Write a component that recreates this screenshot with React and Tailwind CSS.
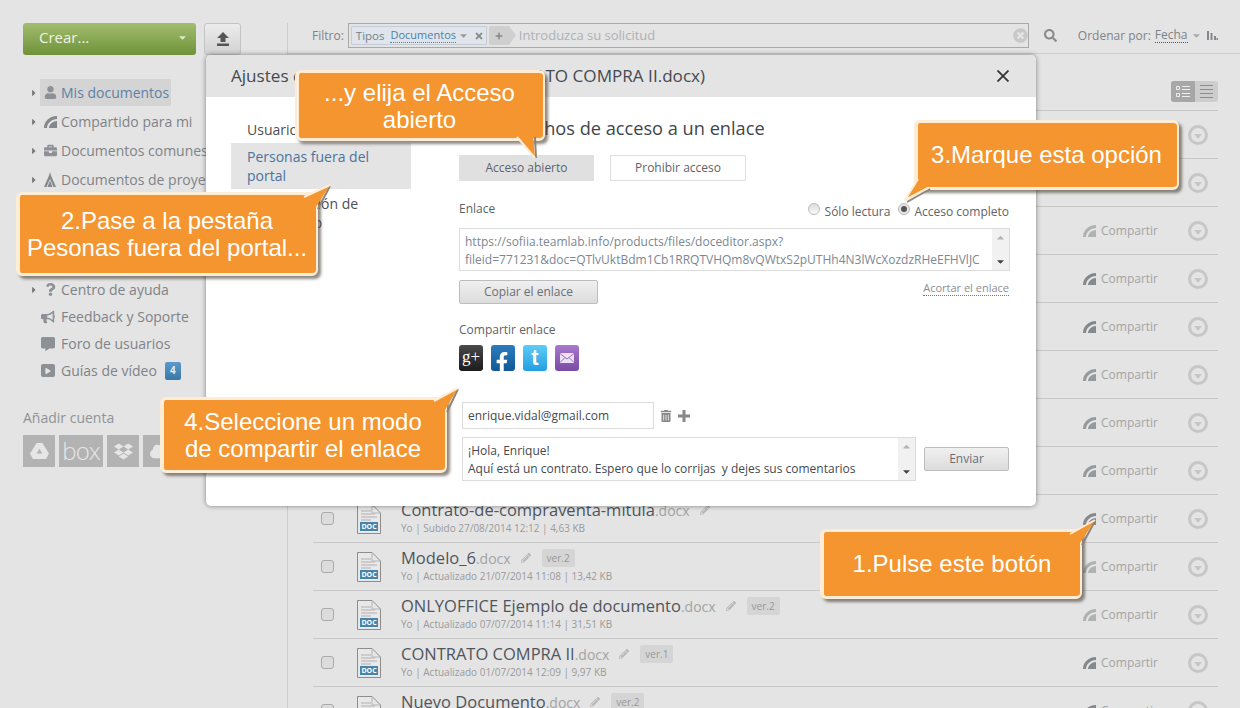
import React from "react";
import {
  FaUser, FaBriefcase, FaQuestion, FaBullhorn, FaCommentAlt, FaTrashAlt, FaSearch,
  FaTimes, FaPencilAlt, FaDropbox, FaCaretDown, FaCaretRight, FaCaretUp, FaPlay,
  FaTimesCircle, FaCloud, FaPlus, FaFacebookF,
} from "react-icons/fa";

const files = [
  { name: "Contrato de servicios", meta: "Yo | Actualizado 12/09/2014 10:20 | 12,10 KB", share: 0.6 },
  { name: "Acuerdo de socios", meta: "Yo | Actualizado 11/09/2014 09:41 | 18,22 KB", share: 0.6 },
  { name: "Oferta comercial", meta: "Yo | Subido 10/09/2014 16:02 | 8,75 KB", share: 0.55 },
  { name: "Plantilla de factura", meta: "Yo | Subido 09/09/2014 13:30 | 6,40 KB", share: 1 },
  { name: "Informe anual", meta: "Yo | Subido 05/09/2014 12:15 | 22,05 KB", share: 1 },
  { name: "Propuesta", meta: "Yo | Subido 03/09/2014 11:48 | 5,32 KB", share: 0.8 },
  { name: "Carta de presentación", meta: "Yo | Subido 02/09/2014 10:05 | 4,90 KB", share: 0.8 },
  { name: "Contrato de alquiler", meta: "Yo | Subido 28/08/2014 18:27 | 7,16 KB", share: 0.8 },
  { name: "Contrato-de-compraventa-mitula", meta: "Yo | Subido 27/08/2014 12:12 | 4,63 KB", share: 1 },
  { name: "Modelo_6", meta: "Yo | Actualizado 21/07/2014 11:08 | 13,42 KB", ver: "ver.2", share: 0.55 },
  { name: "ONLYOFFICE Ejemplo de documento", meta: "Yo | Actualizado 07/07/2014 11:14 | 31,51 KB", ver: "ver.2", share: 0.55 },
  { name: "CONTRATO COMPRA II", meta: "Yo | Actualizado 01/07/2014 12:09 | 9,97 KB", ver: "ver.1", share: 1 },
  { name: "Nuevo Documento", meta: "Yo | Actualizado 30/06/2014 10:33 | 8,02 KB", ver: "ver.2", share: 1 },
];

function ShareIcon({ className = "", style }) {
  return (
    <svg viewBox="0 0 13 12" className={className} style={style} fill="#85888c">
      <path d="M0 12C0 6 5 0 13 0V3C8 3 3 7 3 12Z" />
      <path d="M5 12C5 9 8 5 13 5V12Z" />
    </svg>
  );
}

function ProjectIcon() {
  return (
    <svg viewBox="0 0 12 15" className="h-[15px] w-[12px]" fill="#85888c">
      <path d="M6 0L7 3.5L12 15H9.5L6 7L2.5 15H0L5 3.5Z" />
      <path d="M6 8.5L8.5 15H3.5Z" />
    </svg>
  );
}

function UploadIcon() {
  return (
    <svg viewBox="0 0 14 14" className="h-[14px] w-[14px]" fill="#555">
      <path d="M7 0L13 6H9.5V10H4.5V6H1Z" />
      <path d="M1 11.5H13V14H1Z" />
    </svg>
  );
}

function DocIcon() {
  return (
    <div className="relative h-[30px] w-[24px] shrink-0">
      <svg viewBox="0 0 24 30" className="h-[30px] w-[24px]" fill="none">
        <path d="M.5.5H15L23.5 9V29.5H.5Z" fill="#e8e8e8" stroke="#8d8d8d" />
        <path d="M15 .5V9H23.5" stroke="#b5b5b5" />
        <path d="M4 7H14M4 10H18M4 13H20M4 16H14" stroke="#b0b0b0" />
      </svg>
      <span className="absolute left-[3px] top-[18px] flex h-[9px] w-[18px] items-center justify-center bg-[#4585ad] text-[7px] font-bold leading-none text-white">
        DOC
      </span>
    </div>
  );
}

function NavRow({ icon, label, arrow, active, badge }) {
  return (
    <div className="flex h-[27px] items-center">
      <span className="flex w-[17px] justify-start pl-[6px] text-[10px] text-[#777]">
        {arrow && <FaCaretRight />}
      </span>
      <div className={`flex h-[27px] items-center pl-[3px] pr-[2px] ${active ? "bg-[#d4d4d4]" : ""}`}>
        {/* rows without a caret have a wider icon that starts further left */}
        <span className={arrow
          ? "flex w-[18px] items-center justify-start pl-[1px] text-[13px] text-[#8d9094]"
          : "-ml-[2px] flex w-[20px] items-center justify-start text-[14px] text-[#8d9094]"}
        >
          {icon}
        </span>
        <span className={`whitespace-nowrap text-[14px] ${active ? "text-[#5d80a6]" : "text-[#7f8388]"}`}>{label}</span>
      </div>
      {badge && (
        <span className="ml-[6px] flex h-[18px] w-[16px] items-center justify-center rounded-[2px] bg-gradient-to-b from-[#5c9bc9] to-[#3a77a7] text-[10px] font-bold text-[#dfeaf2]">
          {badge}
        </span>
      )}
    </div>
  );
}

function Sidebar() {
  return (
    <aside className="w-[287px] shrink-0 pl-[23px] pt-[23px]">
      <div className="flex gap-[8px]">
        <div className="flex h-[32px] w-[173px] items-center justify-between rounded-[3px] bg-gradient-to-b from-[#a3bd6e] to-[#6e9238] pb-[3px] pl-[16px] pr-[8px] text-[15px] text-[#eef3e2]">
          <span>Crear...</span>
          <FaCaretDown className="text-[11px] text-[#dfe8cc]" />
        </div>
        <div className="flex h-[32px] w-[37px] items-center justify-center rounded-[3px] border border-[#c4c4c4] bg-gradient-to-b from-[#ececec] to-[#d2d2d2]">
          <UploadIcon />
        </div>
      </div>
      <nav className="mt-[24px] flex flex-col gap-[2px]">
        <NavRow arrow active icon={<FaUser />} label="Mis documentos" />
        <NavRow arrow icon={<ShareIcon className="h-[12px] w-[13px]" />} label="Compartido para mi" />
        <NavRow arrow icon={<FaBriefcase />} label="Documentos comunes" />
        <NavRow arrow icon={<ProjectIcon />} label="Documentos de proyectos" />
      </nav>
      <nav className="mt-[83px]">
        <NavRow arrow icon={<FaQuestion />} label="Centro de ayuda" />
        <NavRow icon={<FaBullhorn />} label="Feedback y Soporte" />
        <NavRow icon={<FaCommentAlt />} label="Foro de usuarios" />
        <NavRow
          icon={
            <span className="flex h-[13px] w-[14px] items-center justify-center rounded-[2px] bg-[#8d9094] text-[6px] text-[#e4e4e4]">
              <FaPlay />
            </span>
          }
          label="Guías de vídeo"
          badge="4"
        />
      </nav>
      <p className="mt-[24px] text-[14px] leading-[19px] text-[#8f9398]">Añadir cuenta</p>
      <div className="mt-[8px] flex gap-[4px] text-[#e6e6e6]">
        <div className="flex h-[32px] w-[32px] items-center justify-center bg-[#b3b3b3]">
          <svg viewBox="0 0 20 18" className="h-[17px] w-[19px]" fill="#e6e6e6">
            <path d="M7 0H13L20 11L17 17H3L0 11ZM10 6L7 11H13Z" />
          </svg>
        </div>
        <div className="flex h-[32px] w-[44px] items-center justify-center bg-[#b3b3b3] text-[24px] font-light leading-none tracking-[-1px]">box</div>
        <div className="flex h-[32px] w-[32px] items-center justify-center bg-[#b3b3b3] text-[19px]"><FaDropbox /></div>
        <div className="flex h-[32px] w-[32px] items-center justify-center bg-[#b3b3b3] text-[19px]"><FaCloud /></div>
      </div>
    </aside>
  );
}

function Toolbar() {
  return (
    <div className="flex h-[31px] items-start border-b border-[#cdcdcd] pl-[24px] text-[12px]">
      <div className="flex h-[25px] items-center text-[#7f8388]">Filtro:</div>
      <div className="ml-[4px] flex h-[25px] w-[681px] items-center border border-[#a9a9a9] pl-[2px] pr-[2px]">
        <div className="flex h-[19px] w-[136px] items-center rounded-[1px] border border-[#c2cdd8] bg-[#dfe5ea] pl-[4px] text-[11.5px] text-[#76808a]">
          <span>Tipos</span>
          <span className="ml-[6px] border-b border-dotted border-[#4a7fb0] text-[11px] leading-[14px] text-[#4f7eab]">Documentos</span>
          <FaCaretDown className="ml-[2px] text-[11px] text-[#999]" />
          <FaTimes className="ml-[5px] text-[10px] text-[#888]" />
        </div>
        <div className="relative ml-[2px] flex h-[19px] w-[20px] items-center justify-center rounded-l-[2px] bg-[#cfcfcf] text-[8px] text-[#888]">
          <FaPlus />
          <svg viewBox="0 0 7 19" className="absolute left-[20px] top-0 h-[19px] w-[7px]" fill="#cfcfcf">
            <path d="M0 0L7 9.5L0 19Z" />
          </svg>
        </div>
        <span className="ml-[10px] text-[13px] text-[#adb1b5]">Introduzca su solicitud</span>
        <FaTimesCircle className="-mr-[2px] ml-auto text-[15px] text-[#c8c8c8]" />
      </div>
      <div className="ml-[15px] flex h-[25px] items-center text-[13px] text-[#8a8a8a]"><FaSearch /></div>
      <div className="ml-[21px] flex h-[25px] items-center text-[#7f8388]">
        <span>Ordenar por:</span>
        <span className="ml-[4px] border-b border-dotted border-[#555] leading-[14px]">Fecha</span>
        <FaCaretDown className="ml-[3px] text-[11px] text-[#aaa]" />
        <svg viewBox="0 0 11 9" className="ml-[5px] h-[9px] w-[11px]" fill="#85888c">
          <path d="M0 0H2V9H0ZM3.5 2H5.5V9H3.5ZM7 5H9V9H7ZM9.5 7H11V9H9.5Z" />
        </svg>
      </div>
    </div>
  );
}

function FileRow({ file }) {
  return (
    <div className="flex h-[48px] items-start border-b border-[#c8c8c8]">
      <span className="ml-[8px] mt-[17px] h-[13px] w-[13px] rounded-[3px] border border-[#aaa] bg-[#dcdcdc]" />
      <div className="ml-[23px] mt-[9px]"><DocIcon /></div>
      <div className="ml-[20px] mt-[4px]">
        <div className="flex h-[22px] items-center whitespace-nowrap">
          <span className="text-[16.5px] text-[#50555c]">{file.name}</span>
          <span className="text-[14px] text-[#a3a3a3]">.docx</span>
          <FaPencilAlt className="ml-[10px] text-[10px] text-[#b8b8b8]" />
          {file.ver && (
            <span className="ml-[11px] flex h-[18px] w-[33px] items-center justify-center rounded-[2px] bg-[#d5d5d5] text-[10px] text-[#979797]">
              {file.ver}
            </span>
          )}
        </div>
        <p className="whitespace-nowrap text-[10px] leading-[14px] text-[#9a9a9a]">{file.meta}</p>
      </div>
      <div className="ml-auto mt-[14px] flex h-[20px] items-center">
        <ShareIcon className="h-[12px] w-[13px]" style={{ opacity: file.share }} />
        <span className="ml-[5px] w-[87px] text-[12px] text-[#a3a3a3]">Compartir</span>
        <span className="mr-[10px] flex h-[20px] w-[20px] items-center justify-center rounded-full border-[3px] border-[#c6c6c6] pt-[2px]">
          <svg viewBox="0 0 8 5" className="h-[5px] w-[8px]" fill="#c6c6c6"><path d="M0 0H8L4 5Z" /></svg>
        </span>
      </div>
    </div>
  );
}

function ViewToggle() {
  return (
    <div className="mr-[22px] flex h-[21px] w-[47px] overflow-hidden rounded-[3px] bg-[#cdcdcd]">
      <div className="flex w-[24px] items-center justify-center bg-[#a7a7a7]">
        <svg viewBox="0 0 14 11" className="h-[11px] w-[14px]" fill="none" stroke="#eee">
          <path d="M.5.5H3.5V3.5H.5ZM.5 7.5H3.5V10.5H.5ZM6 .5H14M6 3.5H14M6 7.5H14M6 10.5H14" />
        </svg>
      </div>
      <div className="flex w-[23px] flex-col justify-center gap-[3px] px-[5px]">
        <span className="h-px bg-[#8d8d8d]" />
        <span className="h-px bg-[#8d8d8d]" />
        <span className="h-px bg-[#8d8d8d]" />
        <span className="h-px bg-[#8d8d8d]" />
      </div>
    </div>
  );
}

function GrayButton({ children, className = "" }) {
  return (
    <div className={`flex h-[24px] items-center justify-center rounded-[2px] border border-[#bdbdbd] bg-gradient-to-b from-[#f0f0f0] to-[#dcdcdc] text-[12px] text-[#6b7076] ${className}`}>
      {children}
    </div>
  );
}

function ScrollArrows() {
  return (
    <div className="flex w-[17px] shrink-0 flex-col items-center justify-between bg-[#f1f1f1] py-[3px] text-[11px]">
      <FaCaretUp className="text-[#b5b5b5]" />
      <FaCaretDown className="text-[#444]" />
    </div>
  );
}

function SocialIcons() {
  return (
    <div className="mt-[7px] flex gap-[8px]">
      <span className="flex h-[26px] w-[24px] items-center justify-center rounded-[3px] bg-gradient-to-b from-[#4a4a4a] to-[#1c1c1c] pb-[3px] font-['Liberation_Serif',serif] text-[17px] leading-none text-white">
        g+
      </span>
      <span className="flex h-[26px] w-[24px] items-end justify-end overflow-hidden rounded-[3px] bg-gradient-to-b from-[#2a7cc0] to-[#125896] pr-[3px] text-[20px] text-white">
        <FaFacebookF className="translate-y-[1px]" />
      </span>
      <span className="flex h-[26px] w-[24px] items-center justify-center rounded-[3px] bg-gradient-to-b from-[#5cccf7] to-[#1f9fe0] pb-[1px] font-['Liberation_Sans',sans-serif] text-[22px] font-bold leading-none text-white">
        t
      </span>
      <span className="flex h-[26px] w-[24px] items-center justify-center rounded-[3px] bg-gradient-to-b from-[#a978cf] to-[#7a4ba3]">
        <svg viewBox="0 0 14 10" className="h-[10px] w-[14px]">
          <path d="M0 0H14V10H0Z" fill="#ece2f4" />
          <path d="M0 .5L7 6L14 .5M0 9.5L5 4.5M14 9.5L9 4.5" fill="none" stroke="#9a6cc2" />
        </svg>
      </span>
    </div>
  );
}

function Modal() {
  return (
    <div className="absolute left-[206px] top-[55px] h-[451px] w-[830px] overflow-hidden rounded-[5px] bg-white shadow-[0_0_5px_rgba(0,0,0,0.45)]">
      <div className="flex h-[42px] items-center justify-between bg-[#e4e4e4] pl-[25px] pr-[27px] text-[17.1px] text-[#444a50]">
        <span>Ajustes de acceso compartido (CONTRATO COMPRA II.docx)</span>
        <svg viewBox="0 0 12 12" className="h-[12px] w-[12px]" fill="none" stroke="#333" strokeWidth="1.8">
          <path d="M.5.5L11.5 11.5M11.5.5L.5 11.5" />
        </svg>
      </div>
      <div className="flex">
        <div className="ml-[25px] w-[180px] pt-[23px] text-[14px] leading-[19px]">
          <p className="pb-[4px] pl-[16px] text-[#4b5056]">Usuarios del portal</p>
          <p className="bg-[#e4e4e4] py-[4px] pl-[16px] pr-[20px] text-[#4a73a0]">Personas fuera del portal</p>
          <p className="pl-[16px] pt-[5px] text-[#4b5056]">Incorporación de documento</p>
        </div>
        <div className="ml-[48px] w-[551px] pt-[20px]">
          <h2 className="h-[23px] whitespace-nowrap pl-[2px] text-[18.2px] leading-[22px] text-[#40464c]">Dar derechos de acceso a un enlace</h2>
          <div className="mt-[15px] flex gap-[16px] text-[12px] text-[#5e6369]">
            <div className="flex h-[26px] w-[135px] items-center justify-center bg-[#e0e0e0]">Acceso abierto</div>
            <div className="flex h-[26px] w-[136px] items-center justify-center border border-[#e0e0e0]">Prohibir acceso</div>
          </div>
          <div className="mt-[18px] flex h-[20px] items-center justify-between text-[12px] text-[#5e6369]">
            <span>Enlace</span>
            <div className="flex items-center pr-[1px]">
              <span className="h-[12px] w-[12px] rounded-full border border-[#bbb] bg-gradient-to-b from-[#dcdcdc] to-[#fafafa]" />
              <span className="ml-[5px] mt-[5px]">Sólo lectura</span>
              <span className="ml-[8px] flex h-[12px] w-[12px] items-center justify-center rounded-full border border-[#bbb] bg-[#e6e6e6]">
                <span className="h-[6px] w-[6px] rounded-full bg-[#555]" />
              </span>
              <span className="ml-[4px] mt-[5px]">Acceso completo</span>
            </div>
          </div>
          <div className="mt-[9px] flex h-[43px] border border-[#dcdcdc]">
            <p className="min-w-0 flex-1 overflow-hidden whitespace-pre py-[4px] pl-[5px] text-[12px] leading-[18px] text-[#7b8794]">
              {"https://sofiia.teamlab.info/products/files/doceditor.aspx?\nfileid=771231&doc=QTlvUktBdm1Cb1RRQTVHQm8vQWtxS2pUTHh4N3lWcXozdzRHeEFHVlJC"}
            </p>
            <ScrollArrows />
          </div>
          <div className="mt-[9px] flex items-start justify-between">
            <GrayButton className="w-[139px]">Copiar el enlace</GrayButton>
            <span className="mr-[1px] mt-[1px] border-b border-dotted border-[#777] text-[11px] leading-[14px] text-[#8a8e93]">Acortar el enlace</span>
          </div>
          <p className="mt-[18px] h-[16px] text-[12px] leading-[16px] text-[#5e6369]">Compartir enlace</p>
          <SocialIcons />
          <div className="ml-[3px] mt-[31px] flex items-center">
            <div className="flex h-[27px] w-[192px] items-center border border-[#dcdcdc] pl-[5px] text-[12px] text-[#444a50]">enrique.vidal@gmail.com</div>
            <FaTrashAlt className="ml-[6px] text-[12px] text-[#888]" />
            <svg viewBox="0 0 12 12" className="ml-[6px] h-[12px] w-[12px]" fill="#888">
              <path d="M4.5 0H7.5V4.5H12V7.5H7.5V12H4.5V7.5H0V4.5H4.5Z" />
            </svg>
          </div>
          <div className="ml-[3px] mt-[8px] flex items-center">
            <div className="flex h-[44px] w-[454px] border border-[#dcdcdc]">
              <p className="min-w-0 flex-1 overflow-hidden whitespace-pre py-[4px] pl-[5px] text-[12px] leading-[18px] text-[#444a50]">
                {"¡Hola, Enrique!\nAquí está un contrato. Espero que lo corrijas  y dejes sus comentarios"}
              </p>
              <ScrollArrows />
            </div>
            <GrayButton className="ml-[8px] w-[85px]">Enviar</GrayButton>
          </div>
        </div>
      </div>
    </div>
  );
}

function Tail({ className, points, edge, shade }) {
  return (
    <svg viewBox="0 0 40 40" className={`absolute h-[40px] w-[40px] ${className}`}>
      <polyline points={shade} fill="none" stroke="#8f8577" strokeWidth="2" />
      <polygon points={points} fill="#f49530" />
      <polyline points={edge} fill="none" stroke="#fdecd6" strokeWidth="2" />
    </svg>
  );
}

function Callout({ className, children, tail }) {
  return (
    <div className={`absolute flex items-center justify-center rounded-[6px] border-y-[3px] border-l-[4px] border-r-[2px] border-[#fdecd6] bg-[#f49530] text-center font-['Liberation_Sans',Arial,sans-serif] text-[24px] leading-[27px] text-white shadow-[3px_3px_3px_rgba(70,60,50,0.6)] ${className}`}>
      <span>{children}</span>
      {tail}
    </div>
  );
}

export default function App() {
  return (
    <div className="relative flex h-[708px] w-[1240px] overflow-hidden bg-[#e4e4e4] font-['Open_Sans',sans-serif]">
      <Sidebar />
      <main className="mt-[23px] min-w-0 flex-1 border-l border-[#cdcdcd]">
        <Toolbar />
        <div className="flex h-[56px] items-end justify-end pb-[8px]">
          <ViewToggle />
        </div>
        <div className="ml-[25px] mr-[22px] border-t border-[#c8c8c8]">
          {files.map((file) => (
            <FileRow key={file.name} file={file} />
          ))}
        </div>
      </main>

      <Modal />

      <Callout
        className="left-[820px] top-[529px] h-[70px] w-[262px] pb-[2px]"
        tail={<Tail className="right-[-16px] top-[-23px]" points="16,24 39,11 24,34 16,34" edge="14,25 39,11" shade="39,12 26,36" />}
      >
        1.Pulse este botón
      </Callout>
      <Callout
        className="left-[16px] top-[192px] h-[84px] w-[302px] pr-[2px]"
        tail={<Tail className="right-[-15px] top-[-22px]" points="15,23 39,12 25,34 15,34" edge="13,24 39,12" shade="39,13 27,36" />}
      >
        2.Pase a la pestaña
        <br />
        Pesonas fuera del portal...
      </Callout>
      <Callout
        className="left-[914px] top-[120px] h-[70px] w-[265px] pb-[2px] pr-[2px]"
        tail={<Tail className="bottom-[-26px] left-[-14px]" points="14,7 24,14 1,27" edge="14,6 1,27 24,15" shade="3,29 26,16" />}
      >
        3.Marque esta opción
      </Callout>
      <Callout
        className="left-[160px] top-[397px] h-[76px] w-[287px] pr-[3px]"
        tail={<Tail className="right-[-15px] top-[-24px]" points="16,24 38,12 25,34 16,34" edge="14,25 38,12" shade="38,13 27,36" />}
      >
        4.Seleccione un modo
        <br />
        de compartir el enlace
      </Callout>
      <Callout
        className="left-[295px] top-[70px] h-[71px] w-[250px] pr-[3px]"
        tail={<Tail className="bottom-[-29px] right-[-4px]" points="10,8 26,8 28,31" edge="10,10 28,31" shade="28,10 29,31" />}
      >
        ...y elija el Acceso
        <br />
        abierto
      </Callout>
    </div>
  );
}
